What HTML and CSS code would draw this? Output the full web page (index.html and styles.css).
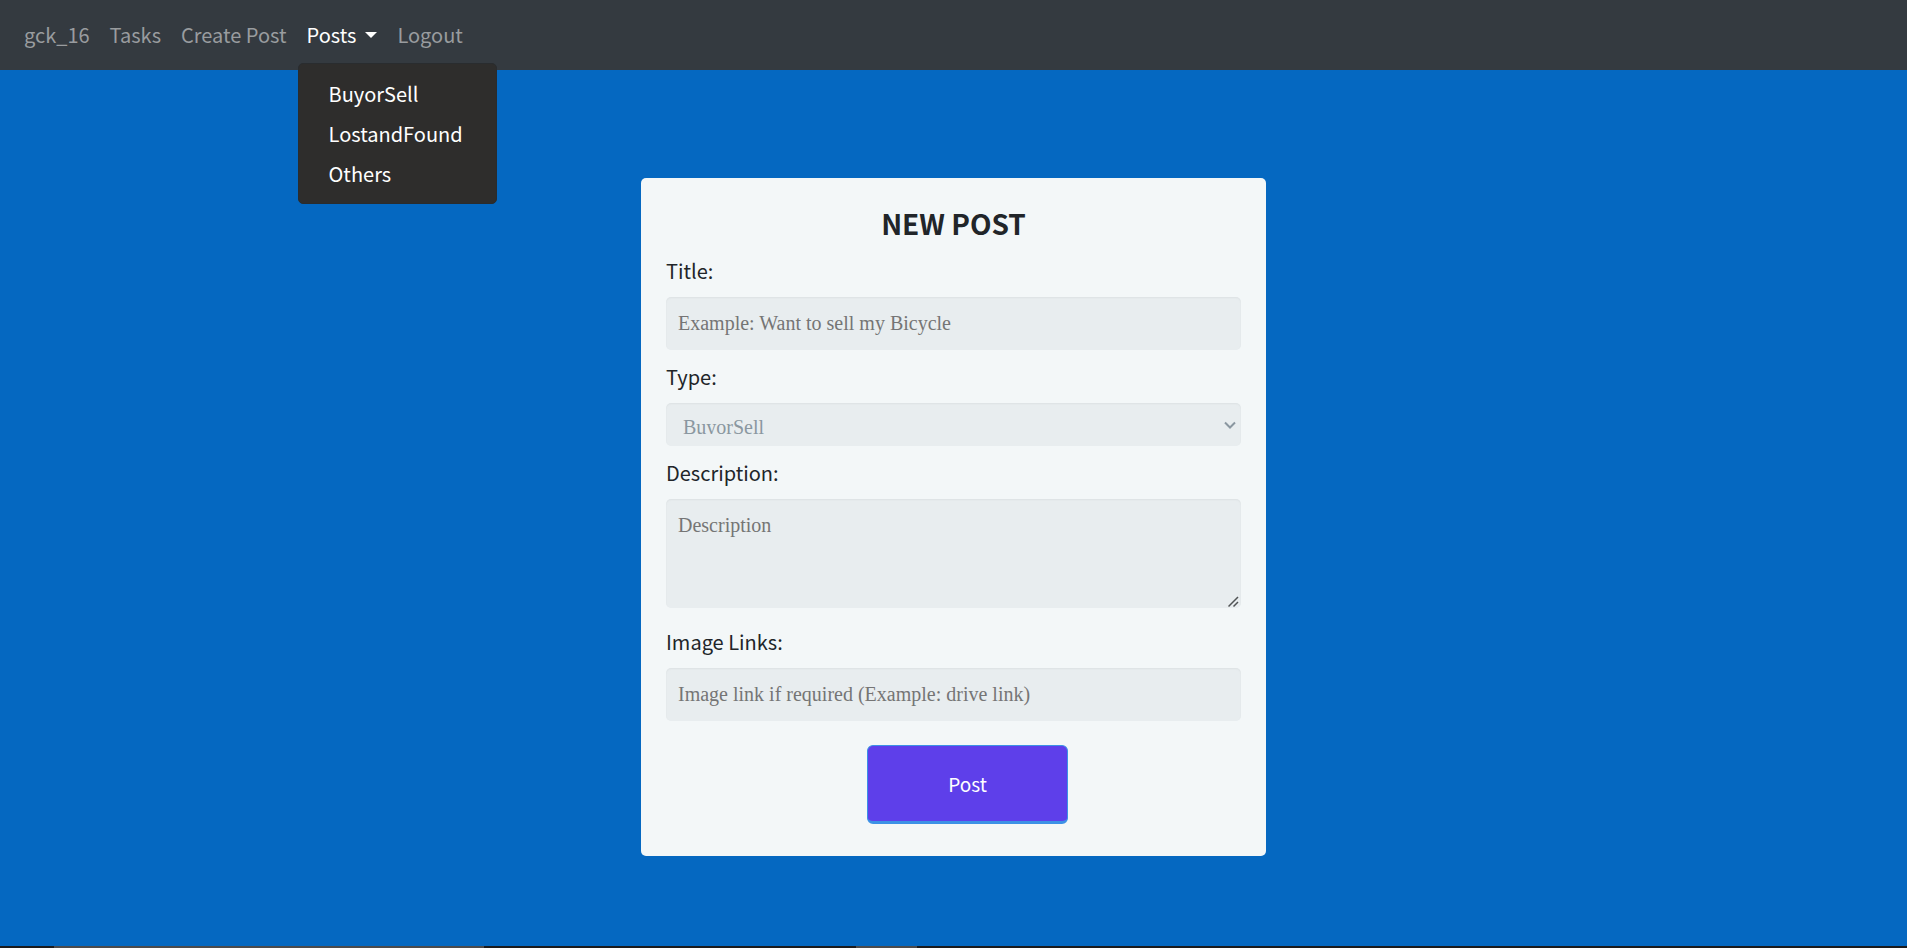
FILE: index.html
```html
<!DOCTYPE html>
<html lang="en">
<head>
<meta charset="utf-8">
<meta name="viewport" content="width=device-width, initial-scale=1">
<title>New Post</title>
<link rel="stylesheet" href="styles.css">
</head>
<body>
<nav class="navbar">
  <ul class="nav-list">
    <li><a class="nav-link" href="#">gck_16</a></li>
    <li><a class="nav-link" href="#">Tasks</a></li>
    <li><a class="nav-link" href="#">Create Post</a></li>
    <li class="dropdown">
      <a class="nav-link active" href="#" aria-expanded="true">Posts<span class="caret"></span></a>
      <div class="dropdown-menu">
        <a class="dropdown-item" href="#">BuyorSell</a>
        <a class="dropdown-item" href="#">LostandFound</a>
        <a class="dropdown-item" href="#">Others</a>
      </div>
    </li>
    <li><a class="nav-link" href="#">Logout</a></li>
  </ul>
</nav>
<main class="content">
  <form class="card">
    <h1 class="heading">NEW POST</h1>
    <label class="label" for="title">Title:</label>
    <input class="field" id="title" type="text" placeholder="Example: Want to sell my Bicycle">
    <label class="label" for="type">Type:</label>
    <select class="field select" id="type">
      <option>BuyorSell</option>
      <option>LostandFound</option>
      <option>Others</option>
    </select>
    <label class="label" for="description">Description:</label>
    <textarea class="field area" id="description" placeholder="Description"></textarea>
    <label class="label" for="image">Image Links:</label>
    <input class="field" id="image" type="text" placeholder="Image link if required (Example: drive link)">
    <button class="submit" type="button">Post</button>
  </form>
</main>
<footer class="strip"><span class="strip-window"></span><span class="strip-active"></span></footer>
</body>
</html>
```

FILE: styles.css
```css
* { box-sizing: border-box; }

body {
  margin: 0;
  min-height: 100vh;
  display: flex;
  flex-direction: column;
  background: #0568c1;
  color: #212529;
  font-family: "Noto Sans CJK SC", "Noto Sans", sans-serif;
  font-size: 20px;
  line-height: 36px;
}

.navbar {
  display: flex;
  align-items: center;
  height: 70px;
  padding: 0 24px;
  background: #343a40;
}

.nav-list {
  display: flex;
  gap: 20px;
  margin: 0;
  padding: 0;
  list-style: none;
}

.nav-link {
  color: #999c9f;
  text-decoration: none;
  white-space: nowrap;
}

.nav-link.active { color: #fff; }

.dropdown { position: relative; }

.caret {
  display: inline-block;
  margin-left: 9px;
  vertical-align: 5px;
  border-top: 6px solid;
  border-left: 6px solid transparent;
  border-right: 6px solid transparent;
}

.dropdown-menu {
  position: absolute;
  top: 46px;
  left: -9px;
  width: 199px;
  padding: 10px 0 9px;
  border: 1px solid #292c2f;
  border-radius: 5px;
  background: #2e2d2c;
}

.dropdown-item {
  display: block;
  padding: 0 30px;
  color: #fff;
  line-height: 40px;
  text-decoration: none;
}

.content {
  flex: 1;
  padding: 108px 16px 88px;
}

.card {
  display: flex;
  flex-direction: column;
  max-width: 625px;
  margin: 0 auto;
  padding: 24px 25px 32px;
  border-radius: 5px;
  background: #f3f7f8;
}

.heading {
  margin: 0;
  font-size: 28px;
  font-weight: 700;
  line-height: 42px;
  text-align: center;
}

.label { margin: 9px 0 8px; }

.field {
  width: 100%;
  height: 53px;
  margin: 0;
  padding: 12px;
  border: 0;
  border-radius: 5px;
  background: #e8edef;
  box-shadow: inset 0 1px 2px rgba(0, 0, 0, 0.05);
  color: #8a97a0;
  font-family: Georgia, "Liberation Serif", serif;
  font-size: 20px;
  line-height: 24px;
}

.field::placeholder { color: #757575; opacity: 1; }

.select {
  height: 43px;
  padding: 12px 30px 12px 17px;
  appearance: none;
  background: #e8edef url("data:image/svg+xml,%3Csvg xmlns='http://www.w3.org/2000/svg' width='12' height='8' fill='none' stroke='%238a97a0' stroke-width='2'%3E%3Cpath d='M1 1.5L6 6.5L11 1.5'/%3E%3C/svg%3E") no-repeat right 5px top 18px;
}

.area {
  height: 109px;
  margin-bottom: 7px;
  padding-top: 14px;
  resize: vertical;
}

.area::-webkit-resizer {
  background: url("data:image/svg+xml,%3Csvg xmlns='http://www.w3.org/2000/svg' width='12' height='12' fill='none' stroke='%23505355' stroke-width='1.5'%3E%3Cpath d='M.5 10.5L10 1M5.5 10.5L10 6'/%3E%3C/svg%3E") no-repeat right 1px bottom 0;
}

.submit {
  align-self: center;
  width: 201px;
  height: 79px;
  margin: 24px 0 0 28px;
  border: 1px solid #3c91e6;
  border-bottom-width: 3px;
  border-radius: 6px;
  background: #5e3fea;
  color: #fff;
  font-family: inherit;
  font-size: 19px;
}

.strip {
  display: flex;
  height: 2px;
  padding-left: 54px;
  gap: 372px;
  background: #1b1b1d;
}

.strip-window { width: 430px; background: #4b4b4d; }

.strip-active { width: 61px; background: #4b4b4d; }
```
